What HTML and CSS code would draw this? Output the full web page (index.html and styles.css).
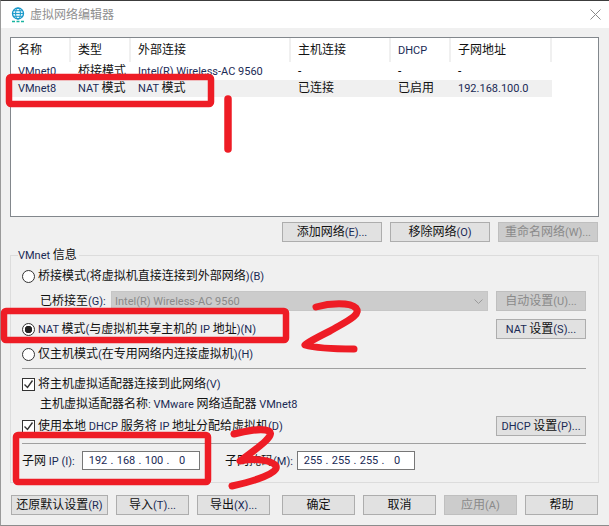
FILE: index.html
```html
<!DOCTYPE html>
<html lang="zh">
<head>
<meta charset="utf-8">
<title>虚拟网络编辑器</title>
<link rel="stylesheet" href="styles.css">
</head>
<body>
<div class="window">
  <header class="titlebar">
    <svg class="app-icon" width="14" height="16" viewBox="0 0 14 16">
      <circle cx="7" cy="6.5" r="5.5" fill="#e8f6fb" stroke="#1496c8" stroke-width="1.3"/>
      <ellipse cx="7" cy="6.5" rx="2.4" ry="5.5" fill="none" stroke="#1496c8"/>
      <path d="M1.5 6.5h11M2.4 3.7h9.2M2.4 9.3h9.2" stroke="#1496c8" stroke-width=".9"/>
      <path d="M1 14.5h3M5.5 14.5h3M10 14.5h3" stroke="#19b5a0" stroke-width="1.4"/>
    </svg>
    <span class="title">虚拟网络编辑器</span>
    <svg class="close" width="11" height="11" viewBox="0 0 11 11"><path d="M.5.5l10 10M10.5.5l-10 10" stroke="#8a8a8a" fill="none"/></svg>
  </header>

  <main class="content">
    <section class="list">
      <div class="row head">
        <span>名称</span><span>类型</span><span>外部连接</span><span>主机连接</span><span><b class="l">DHCP</b></span><span>子网地址</span>
      </div>
      <div class="row item">
        <span><b class="l">VMnet0</b></span><span>桥接模式</span><span><b class="l">Intel(R) Wireless-AC 9560</b></span><span>-</span><span>-</span><span>-</span>
      </div>
      <div class="row item selected">
        <span><b class="l">VMnet8</b></span><span><b class="l">NAT </b>模式</span><span><b class="l">NAT </b>模式</span><span>已连接</span><span>已启用</span><span><b class="l">192.168.100.0</b></span>
      </div>
    </section>

    <div class="list-actions">
      <button class="btn wide">添加网络<b class="l">(E)...</b></button>
      <button class="btn wide">移除网络<b class="l">(O)</b></button>
      <button class="btn wide off">重命名网络<b class="l">(W)...</b></button>
    </div>

    <fieldset class="group">
      <legend><b class="l">VMnet </b>信息</legend>
      <label class="opt first"><span class="radio"></span><span>桥接模式<b class="l">(</b>将虚拟机直接连接到外部网络<b class="l">)(B)</b></span></label>
      <div class="bridge">
        <span class="bridge-label">已桥接至<b class="l">(G):</b></span>
        <div class="select"><b class="l">Intel(R) Wireless-AC 9560</b>
          <svg width="9" height="5" viewBox="0 0 9 5"><path d="M.5.5l4 4 4-4" fill="none" stroke="#9a9a9a"/></svg>
        </div>
        <button class="btn side off">自动设置<b class="l">(U)...</b></button>
      </div>
      <div class="nat">
        <label class="opt"><span class="radio on"></span><span><b class="l">NAT </b>模式<b class="l">(</b>与虚拟机共享主机的<b class="l"> IP </b>地址<b class="l">)(N)</b></span></label>
        <button class="btn side"><b class="l">NAT </b>设置<b class="l">(S)...</b></button>
      </div>
      <label class="opt host"><span class="radio"></span><span>仅主机模式<b class="l">(</b>在专用网络内连接虚拟机<b class="l">)(H)</b></span></label>
      <hr class="rule">
      <label class="opt check1"><span class="check"><svg width="11" height="11" viewBox="0 0 11 11"><path d="M1.5 5.5l3 3 5-7" fill="none" stroke="#333" stroke-width="1.4"/></svg></span><span>将主机虚拟适配器连接到此网络<b class="l">(V)</b></span></label>
      <div class="adapter">主机虚拟适配器名称<b class="l">: VMware </b>网络适配器<b class="l"> VMnet8</b></div>
      <div class="dhcp">
        <label class="opt"><span class="check"><svg width="11" height="11" viewBox="0 0 11 11"><path d="M1.5 5.5l3 3 5-7" fill="none" stroke="#333" stroke-width="1.4"/></svg></span><span>使用本地<b class="l"> DHCP </b>服务将<b class="l"> IP </b>地址分配给虚拟机<b class="l">(D)</b></span></label>
        <button class="btn side"><b class="l">DHCP </b>设置<b class="l">(P)...</b></button>
      </div>
      <hr class="rule second">
      <div class="subnet">
        <span class="sub-label">子网<b class="l"> IP (I):</b></span>
        <div class="ip"><span>192</span><i>.</i><span>168</span><i>.</i><span>100</span><i>.</i><span>0</span></div>
        <span class="mask-label">子网掩码<b class="l">(M):</b></span>
        <div class="ip"><span>255</span><i>.</i><span>255</span><i>.</i><span>255</span><i>.</i><span>0</span></div>
      </div>
    </fieldset>

    <footer class="footer">
      <button class="btn reset">还原默认设置<b class="l">(R)</b></button>
      <button class="btn foot">导入<b class="l">(T)...</b></button>
      <button class="btn foot gap">导出<b class="l">(X)...</b></button>
      <button class="btn foot">确定</button>
      <button class="btn foot">取消</button>
      <button class="btn foot off">应用<b class="l">(A)</b></button>
      <button class="btn foot">帮助</button>
    </footer>
  </main>

  <svg class="marks" width="609" height="526" viewBox="0 0 609 526">
    <g fill="none" stroke="#ee1c25" stroke-linecap="round" stroke-linejoin="round">
      <rect x="9" y="77" width="202" height="27" rx="2" stroke-width="6.5"/>
      <path d="M228 99V149" stroke-width="7.5"/>
      <rect x="4" y="311" width="282" height="29" rx="2" stroke-width="6.5"/>
      <path d="M316 307C330 303 350 302 356 308C362 315 345 322 330 331C318 337 308 342 305 345C315 348 340 349 354 349" stroke-width="7"/>
      <rect x="16" y="435" width="192" height="47" rx="2" stroke-width="6.5"/>
      <path d="M234 434C245 431 262 428 269 431C275 435 262 445 240 461C255 458 272 460 276 466C279 473 255 481 232 486" stroke-width="7"/>
    </g>
  </svg>
</div>
</body>
</html>
```
FILE: styles.css
```css
* { box-sizing: border-box; }
html, body { margin: 0; padding: 0; }
body {
  width: 609px;
  height: 526px;
  overflow: hidden;
  font: 12px/16px Roboto, "Noto Sans CJK SC", sans-serif;
  color: #111;
  background: #f0f0f0;
}
.l { font-weight: 400; font-size: 11px; line-height: 1; color: #1a2a55; }
.off .l, .select .l { color: inherit; }
.window {
  position: relative;
  width: 609px;
  height: 526px;
  border-top: 1px solid #3c3c3c;
  border-left: 1px solid #9a9a9a;
  border-bottom: 1px solid #8c8c8c;
  background: #f0f0f0;
}
.titlebar {
  display: flex;
  align-items: center;
  height: 27px;
  padding: 0 8px 0 10px;
  background: #fff;
}
.app-icon { flex: none; }
.title { margin-left: 5px; font-size: 12px; color: #8f8f8f; flex: 1; }
.close { flex: none; }

.content { padding: 9px 10px 0 9px; }

.list {
  height: 180px;
  border: 1px solid #82878c;
  background: #fff;
}
.row {
  display: grid;
  grid-template-columns: 60px 60px 160px 100px 60px 101px;
  width: 541px;
  white-space: nowrap;
}
.row span { padding-left: 7px; overflow: visible; }
.head { height: 24px; align-items: center; }
.head span { height: 24px; line-height: 24px; border-right: 2px solid #f0f0f0; }
.item { height: 18px; line-height: 18px; }
.selected { height: 17px; line-height: 17px; background: #f0f0f0; }

.list-actions {
  display: flex;
  justify-content: flex-end;
  gap: 8px;
  margin: 5px 1px 0 0;
}
.btn {
  display: block;
  height: 20px;
  padding: 0;
  border: 1px solid #adadad;
  background: #e1e1e1;
  color: #111;
  font: 12px/18px Roboto, "Noto Sans CJK SC", sans-serif;
  white-space: nowrap;
  text-align: center;
}
.btn.off { background: #cccccc; border-color: #bfbfbf; color: #8a8a8a; }
.wide { width: 100px; }
.side { width: 90px; flex: none; }

.group {
  display: block;
  height: 235px;
  margin: 6px 0 0;
  padding: 0 12px 0 11px;
  border: 1px solid #dcdcdc;
  min-width: 0;
}
.group legend {
  padding: 0 2px 0 0;
  margin-left: -4px;
  line-height: 14px;
}
.opt { display: flex; align-items: center; white-space: nowrap; height: 16px; }
.radio {
  flex: none;
  width: 13px;
  height: 13px;
  margin-right: 3px;
  border: 1px solid #333;
  border-radius: 50%;
  background: #fff;
}
.radio.on { background: radial-gradient(circle, #222 0 3.5px, #fff 4px); }
.check {
  flex: none;
  width: 13px;
  height: 13px;
  margin-right: 3px;
  border: 1px solid #333;
  background: #fff;
  display: flex;
}
.first { margin-top: 6px; }
.bridge {
  display: flex;
  align-items: center;
  margin-top: 7px;
  height: 20px;
}
.bridge-label { width: 89px; padding-left: 18px; white-space: nowrap; flex: none; }
.select {
  flex: none;
  width: 377px;
  height: 20px;
  margin-right: 8px;
  padding: 0 4px 0 3px;
  display: flex;
  align-items: center;
  justify-content: space-between;
  background: #cccccc;
  color: #8a8a8a;
  border: 1px solid #c6c6c6;
}
.nat {
  display: flex;
  align-items: center;
  justify-content: space-between;
  margin-top: 8px;
  height: 20px;
}
.host { margin-top: 7px; }
.rule { border: 0; border-top: 1px solid #a0a0a0; margin: 6px 0 0; height: 0; }
.check1 { margin-top: 7px; }
.adapter { margin-top: 4px; padding-left: 18px; white-space: nowrap; }
.dhcp {
  display: flex;
  align-items: center;
  justify-content: space-between;
  margin-top: 4px;
  height: 20px;
}
.rule.second { margin-top: 7px; }
.subnet {
  display: flex;
  align-items: center;
  margin-top: 7px;
  height: 19px;
  white-space: nowrap;
}
.sub-label { width: 60px; flex: none; }
.mask-label { width: 97px; padding-left: 25px; flex: none; }
.ip {
  flex: none;
  width: 118px;
  height: 19px;
  display: flex;
  align-items: center;
  padding-left: 5px;
  border: 1px solid #777;
  background: #fff;
  font-size: 11px;
  color: #1a2a55;
}
.ip span { width: 20px; text-align: center; }
.ip i { font-style: normal; width: 8px; text-align: center; }

.footer {
  display: flex;
  gap: 8px;
  margin: 12px 0 0 1px;
}
.reset { width: 97px; }
.foot { width: 73px; }
.gap { margin-right: 4px; }

.marks { position: absolute; left: -1px; top: -1px; pointer-events: none; }
```
